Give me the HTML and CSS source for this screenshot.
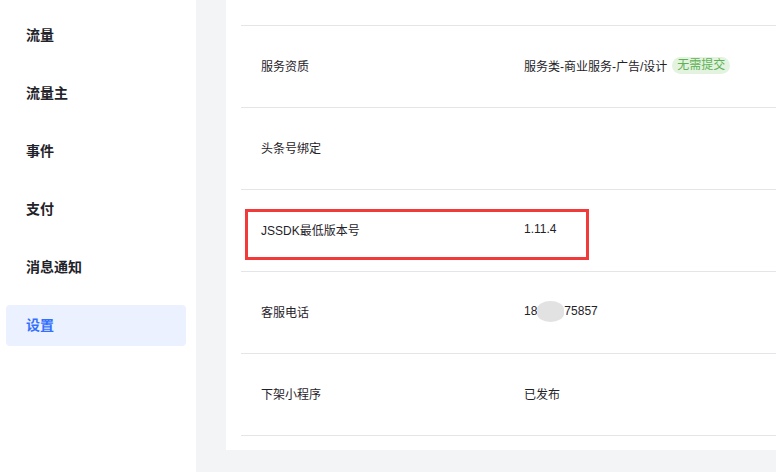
FILE: index.html
```html
<!DOCTYPE html>
<html lang="zh">
<head>
<meta charset="utf-8">
<link rel="stylesheet" href="styles.css">
</head>
<body>
<div class="page">
  <nav class="sidebar">
    <div class="nav-item">流量</div>
    <div class="nav-item">流量主</div>
    <div class="nav-item">事件</div>
    <div class="nav-item">支付</div>
    <div class="nav-item">消息通知</div>
    <div class="nav-item active">设置</div>
  </nav>
  <main class="main">
    <section class="card">
      <div class="row row-cut"></div>
      <div class="row">
        <div class="label">服务资质</div>
        <div class="value">服务类-商业服务-广告/设计<span class="tag">无需提交</span></div>
      </div>
      <div class="row">
        <div class="label">头条号绑定</div>
        <div class="value"></div>
      </div>
      <div class="row highlight">
        <div class="label">JSSDK最低版本号</div>
        <div class="value">1.11.4</div>
        <div class="mark"></div>
      </div>
      <div class="row">
        <div class="label">客服电话</div>
        <div class="value">18<span class="blur"></span>75857</div>
      </div>
      <div class="row">
        <div class="label">下架小程序</div>
        <div class="value">已发布</div>
      </div>
    </section>
  </main>
</div>
</body>
</html>
```

FILE: styles.css
```css
* { box-sizing: border-box; }
html, body {
  margin: 0;
  padding: 0;
  width: 776px;
  height: 472px;
  overflow: hidden;
  background: #f3f4f6;
  font-family: "Liberation Sans", Arial, "Noto Sans CJK SC", sans-serif;
}
.page {
  display: flex;
  height: 472px;
}
.sidebar {
  width: 196px;
  flex: none;
  background: #ffffff;
  padding: 15px 10px 0 6px;
  display: flex;
  flex-direction: column;
  gap: 17px;
}
.nav-item {
  height: 41px;
  line-height: 41px;
  padding-left: 20px;
  font-size: 14px;
  font-weight: bold;
  color: #1f2329;
  border-radius: 4px;
}
.nav-item.active {
  background: #ebf1fe;
  color: #3370ff;
}
.main {
  flex: 1;
  padding-left: 30px;
}
.card {
  background: #ffffff;
  padding: 0 0 15px 15px;
  height: 450px;
}
.row {
  display: flex;
  align-items: center;
  height: 82px;
  padding-bottom: 3px;
  border-bottom: 1px solid #e4e5e7;
  font-size: 12px;
  color: #1f2329;
  position: relative;
}
.row-cut {
  height: 26px;
}
.label {
  width: 283px;
  padding-left: 20px;
  flex: none;
}
.value {
  display: flex;
  align-items: center;
}
.tag {
  display: inline-block;
  margin-left: 5px;
  height: 17px;
  line-height: 17px;
  padding: 0 5px;
  border-radius: 9px;
  background: #e3f3df;
  color: #5eb155;
  font-size: 12px;
}
.blur {
  display: inline-block;
  width: 27px;
  height: 21px;
  border-radius: 50% / 40%;
  background: #e2e2e2;
}
.mark {
  position: absolute;
  left: 4px;
  top: 19px;
  width: 344px;
  height: 51px;
  border: 3px solid #f33a3a;
}
```
